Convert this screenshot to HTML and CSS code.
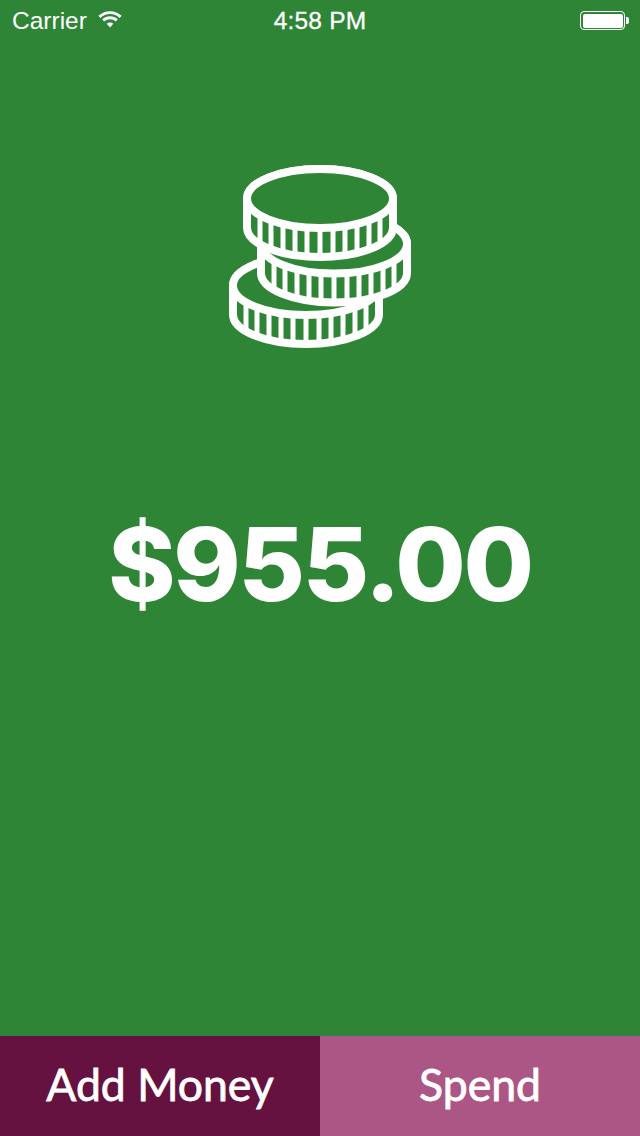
FILE: index.html
```html
<!DOCTYPE html>
<html lang="en">
<head>
<meta charset="utf-8">
<title>Wallet</title>
<link rel="stylesheet" href="styles.css">
</head>
<body>
<div class="screen">
  <header class="status">
    <div class="status-left">
      <span>Carrier</span>
      <svg class="wifi" width="26" height="20" viewBox="0 0 26 20" aria-hidden="true">
        <path d="M1.5 7.2C7.8 1 18.2 1 24.5 7.2" class="wifi-arc"/>
        <path d="M5.6 11C9.7 7 16.3 7 20.4 11" class="wifi-arc"/>
        <path d="M9.4 14.6C11.4 12.7 14.6 12.7 16.6 14.6L13 18.6Z" class="wifi-dot"/>
      </svg>
    </div>
    <div class="status-time">4:58 PM</div>
    <div class="status-right">
      <span class="battery"><span class="battery-fill"></span></span>
      <span class="battery-cap"></span>
    </div>
  </header>
  <main class="content">
    <svg class="coins" width="184" height="186" viewBox="228 164 184 186" aria-hidden="true">
      <defs>
        <g id="coin">
          <path class="coin-body" d="M-73 0A73 29.5 0 0 1 73 0V29A73 29.5 0 0 1 -73 29Z"/>
          <path class="coin-ticks" d="M-60 17V46M-49 22V51M-37 25V54M-25 28V57M-13 29V58M0 29.5V58.5M13 29V58M25 28V57M37 25V54M49 22V51M60 17V46"/>
          <path class="coin-outline" d="M-73 0A73 29.5 0 0 1 73 0V29A73 29.5 0 0 1 -73 29Z"/>
          <ellipse class="coin-face" cx="0" cy="0" rx="73" ry="29.5"/>
        </g>
      </defs>
      <use href="#coin" x="306" y="285.5"/>
      <use href="#coin" x="334" y="244"/>
      <use href="#coin" x="320" y="198.5"/>
    </svg>
    <div class="amount">$955.00</div>
  </main>
  <footer class="actions">
    <div class="action action-add">Add Money</div>
    <div class="action action-spend">Spend</div>
  </footer>
</div>
</body>
</html>
```
FILE: styles.css
```css
html, body {
  margin: 0;
  padding: 0;
}
.screen {
  width: 640px;
  height: 1136px;
  display: flex;
  flex-direction: column;
  background: #2d8535;
  color: #fff;
  overflow: hidden;
}
.status {
  height: 40px;
  display: grid;
  grid-template-columns: 1fr auto 1fr;
  align-items: center;
  padding: 1px 12px 0;
  font-family: "Liberation Sans", Arial, sans-serif;
  font-size: 24.5px;
  box-sizing: border-box;
}
.status-left {
  display: flex;
  align-items: center;
  gap: 11px;
}
.wifi {
  width: 24px;
  height: 19px;
  margin-top: -2px;
}
.wifi-arc {
  fill: none;
  stroke: #fff;
  stroke-width: 3.2;
}
.wifi-dot {
  fill: #fff;
}
.status-time {
  -webkit-text-stroke: 0.3px #fff;
  letter-spacing: 0.2px;
}
.status-right {
  display: flex;
  justify-content: flex-end;
  align-items: center;
  margin-right: -1px;
}
.battery {
  width: 45px;
  height: 19px;
  box-sizing: border-box;
  border: 1px solid #fff;
  border-radius: 4px;
  padding: 1.5px;
  display: flex;
}
.battery-fill {
  flex: 1;
  background: #fff;
  border-radius: 2px;
}
.battery-cap {
  width: 3px;
  height: 7px;
  margin-left: 1px;
  background: #fff;
  border-radius: 0 2px 2px 0;
}
.content {
  flex: 1;
  display: flex;
  flex-direction: column;
  align-items: center;
  padding-top: 124px;
}
.coins {
  display: block;
}
.coin-body {
  fill: #2d8535;
}
.coin-ticks {
  fill: none;
  stroke: #fff;
  stroke-width: 5;
}
.coin-outline,
.coin-face {
  fill: none;
  stroke: #fff;
  stroke-width: 8;
}
.coin-face {
  fill: #2d8535;
}
.amount {
  margin-top: 150px;
  font-family: Inter, sans-serif;
  font-weight: 800;
  font-size: 102px;
  letter-spacing: -2.3px;
  line-height: 128px;
  white-space: nowrap;
}
.actions {
  height: 100px;
  display: flex;
}
.action {
  flex: 1;
  display: flex;
  align-items: center;
  justify-content: center;
  font-family: Lato, sans-serif;
  font-weight: 400;
  font-size: 44.5px;
  -webkit-text-stroke: 0.8px #fff;
  padding-bottom: 6px;
  box-sizing: border-box;
}
.action-add {
  background: #651240;
}
.action-spend {
  background: #ab5684;
}
```
